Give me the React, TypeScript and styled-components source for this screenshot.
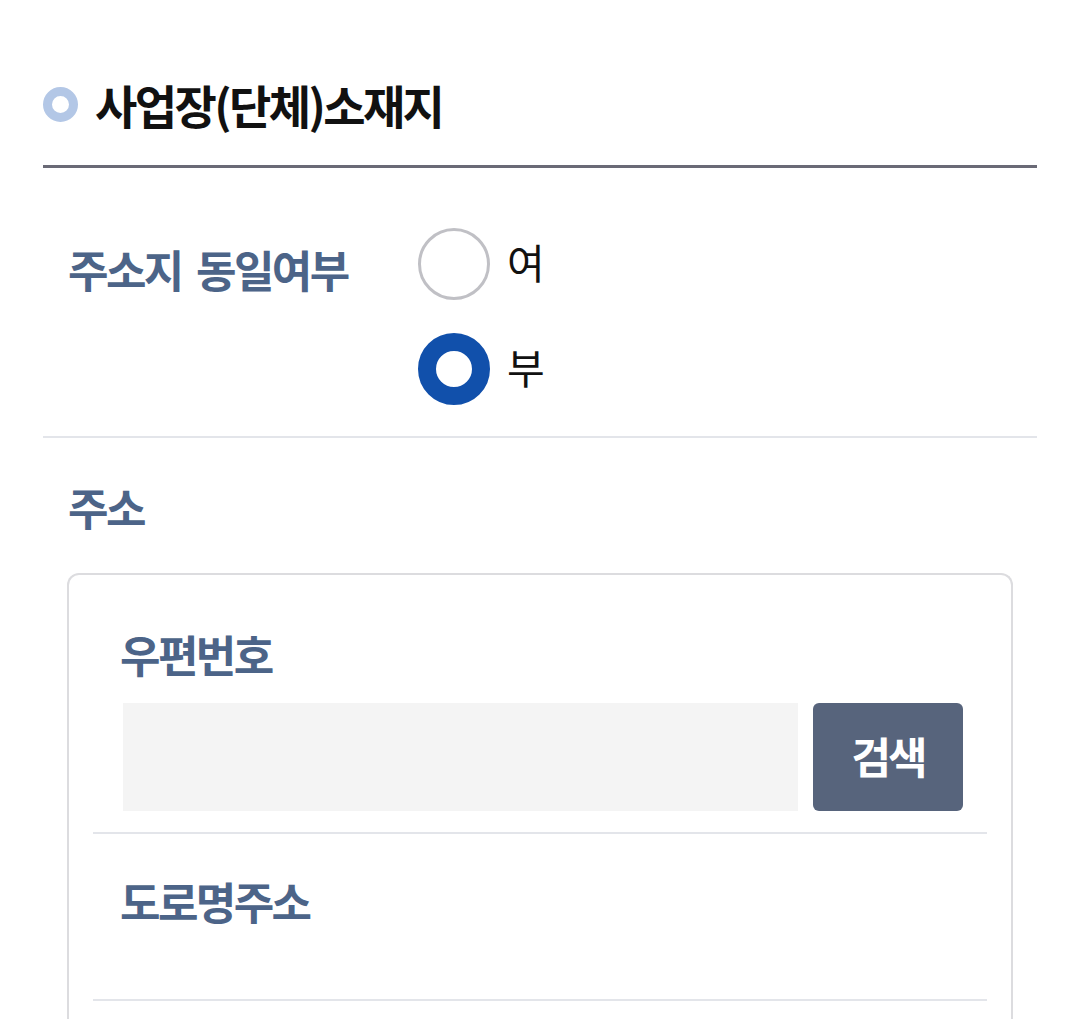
import React from "react";
import styled, { createGlobalStyle } from "styled-components";

const Global = createGlobalStyle`
  html, body { margin: 0; padding: 0; background: #ffffff; }
  body { font-family: "Noto Sans CJK KR", "Noto Sans", sans-serif; }
  * { box-sizing: border-box; }
`;

const Page = styled.div`
  padding: 74px 43px 0 43px;
  height: 1019px;
  overflow: hidden;
`;

const Header = styled.div`
  display: flex;
  align-items: center;
  gap: 17px;
  height: 60px;
`;

const TitleIcon = styled.span`
  width: 35px;
  height: 35px;
  border-radius: 50%;
  border: 9px solid #b3c7e6;
  flex: none;
`;

const Title = styled.h2`
  margin: 0;
  font-size: 46px;
  line-height: 60px;
  font-weight: 700;
  letter-spacing: -2.6px;
  color: #111111;
`;

const Rule = styled.div<{ $strong?: boolean; $top?: number }>`
  height: ${(p) => (p.$strong ? 3 : 2)}px;
  background: ${(p) => (p.$strong ? "#6a6a76" : "#e3e5ea")};
  margin-top: ${(p) => p.$top ?? 0}px;
`;

const FormRow = styled.div`
  display: flex;
  align-items: flex-start;
  padding: 60px 0 31px 25px;
`;

const Label = styled.div<{ $top?: number }>`
  font-size: 44px;
  line-height: 48px;
  font-weight: 700;
  letter-spacing: -2.6px;
  color: #4c6488;
  padding-top: ${(p) => p.$top ?? 0}px;
`;

const RowLabel = styled(Label)`
  width: 350px;
  flex: none;
  word-spacing: 7px;
`;

const RadioGroup = styled.div`
  display: flex;
  flex-direction: column;
  gap: 33px;
`;

const RadioOption = styled.label`
  display: flex;
  align-items: center;
  gap: 17px;
  cursor: pointer;
`;

const RadioCircle = styled.span<{ $checked?: boolean }>`
  width: 72px;
  height: 72px;
  border-radius: 50%;
  flex: none;
  border: ${(p) => (p.$checked ? "18px solid #1150ab" : "3px solid #c0c0c5")};
  background: #ffffff;
`;

const RadioText = styled.span`
  font-size: 41px;
  line-height: 48px;
  font-weight: 400;
  color: #111111;
  margin-top: -6px;
`;

const AddressBlock = styled.div`
  padding: 45px 0 0 25px;
`;

const Card = styled.div`
  margin: 42px 24px 0 -1px;
  border: 2px solid #dcdcdf;
  border-bottom: none;
  border-radius: 12px 12px 0 0;
  padding: 0 24px;
  height: 460px;
`;

const Field = styled.div<{ $pt: number; $pb: number }>`
  padding: ${(p) => p.$pt}px 24px ${(p) => p.$pb}px 27px;
`;

const InputRow = styled.div`
  display: flex;
  gap: 15px;
  margin-top: 25px;
  padding-left: 3px;
`;

const Input = styled.input`
  flex: 1;
  height: 108px;
  border: none;
  background: #f4f4f4;
  outline: none;
  font-size: 36px;
`;

const SearchButton = styled.button`
  width: 150px;
  height: 108px;
  border: none;
  border-radius: 6px;
  background: #57647c;
  color: #ffffff;
  font-family: "Noto Sans CJK KR", sans-serif;
  font-size: 43px;
  font-weight: 700;
  letter-spacing: -3px;
  padding: 0 0 4px 0;
`;

export default function App() {
  return (
    <>
      <Global />
      <Page>
        <Header>
          <TitleIcon />
          <Title>사업장(단체)소재지</Title>
        </Header>
        <Rule $strong $top={31} />
        <FormRow>
          <RowLabel $top={17}>주소지 동일여부</RowLabel>
          <RadioGroup>
            <RadioOption>
              <RadioCircle />
              <RadioText>여</RadioText>
            </RadioOption>
            <RadioOption>
              <RadioCircle $checked />
              <RadioText>부</RadioText>
            </RadioOption>
          </RadioGroup>
        </FormRow>
        <Rule />
        <AddressBlock>
          <Label>주소</Label>
          <Card>
            <Field $pt={55} $pb={21}>
              <Label>우편번호</Label>
              <InputRow>
                <Input readOnly />
                <SearchButton>검색</SearchButton>
              </InputRow>
            </Field>
            <Rule $top={0} />
            <Field $pt={43} $pb={74}>
              <Label>도로명주소</Label>
            </Field>
            <Rule />
          </Card>
        </AddressBlock>
      </Page>
    </>
  );
}
